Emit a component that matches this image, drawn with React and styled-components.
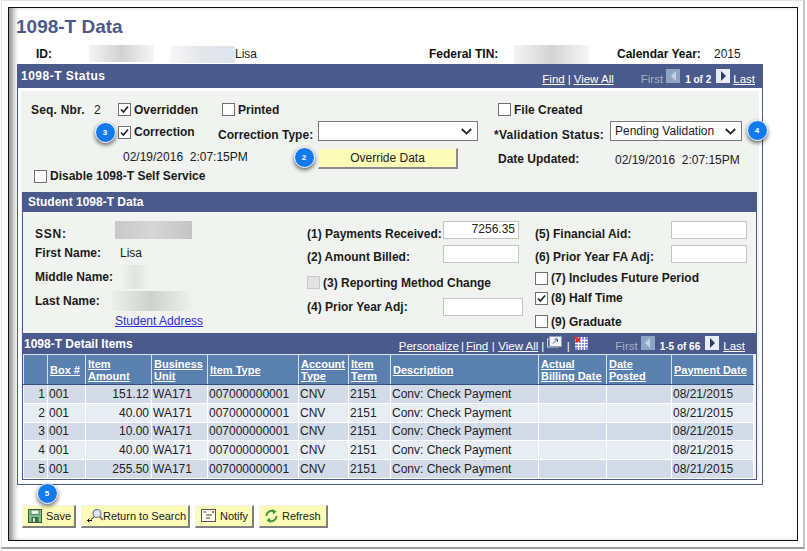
import React from "react";
import styled, { createGlobalStyle } from "styled-components";

const Global = createGlobalStyle`
  html, body { margin: 0; padding: 0; background: #fff; }
  body { font-family: "Liberation Sans", Arial, sans-serif; font-size: 12px; color: #111; }
  a { cursor: pointer; }
`;

const Shot = styled.div`
  width: 807px; height: 551px; box-sizing: border-box; overflow: hidden;
  background: #fff; padding: 0 2px 2px 1px;
`;
const Frame = styled.div`
  height: 100%; box-sizing: border-box; background: #fff;
  border: 1px solid #e4e4e4; border-right: 2px solid #c4c4c4; border-bottom: 2px solid #9c9c9c;
  padding: 6px 5px 6px 6px;
`;
const Win = styled.div`
  position: relative; height: 100%; box-sizing: border-box; background: #fff; border: 1px solid #111;
  padding: 0 0 0 8px;
  box-shadow: inset 7px 0 6px -3px #8a8a8a;
`;
const Title = styled.h1`
  margin: 0 0 0 -1px; padding: 8px 0 0 0; height: 28px; box-sizing: border-box; font-size: 19px; line-height: 22px; font-weight: bold; color: #4a5a8a;
`;
const InfoRow = styled.div`
  display: grid; grid-template-columns: 72px 81px 65px 194px 85px 103px 97px 1fr; align-items: center; height: 28px; box-sizing: border-box; padding-top: 8px;
  font-size: 12px;
`;
const InfoLabel = styled.b`
  padding-left: ${p => p.$pl || 0}px; white-space: nowrap;
`;
const Blur = styled.span`
  display: block; width: ${p => p.$w}px; height: ${p => p.$h}px; margin-top: ${p => p.$mt || 0}px;
  background: linear-gradient(90deg, ${p => p.$from || "#f4f4f4"}, ${p => p.$mid || "#d9d9d9"} 50%, ${p => p.$to || "#f6f6f6"});
`;
const Panel = styled.section`
  position: relative; width: 746px; box-sizing: border-box; border: 1px solid #4a5a8a; border-top: 0; background: #fff;
  padding-bottom: 4px;
`;
const PanelHead = styled.header`
  display: flex; align-items: center; justify-content: space-between; height: 24px; background: #4a5a8a; margin: 0 -1px;
  color: #fff; padding: 0 8px 0 4px; font-weight: bold; font-size: 12px; letter-spacing: .5px;
`;
const Nav = styled.div`
  display: flex; align-items: center; font-weight: normal; font-size: 11.5px; letter-spacing: 0; color: #fff; padding-top: ${p => p.$pt ?? 5}px; white-space: nowrap;
`;
const NavLink = styled.a`
  color: #fff; text-decoration: underline; font-size: 11.5px; margin-left: ${p => p.$ml || 0}px;
`;
const Sep = styled.span`
  margin: 0 ${p => p.$m ?? 3}px; color: #fff;
`;
const Dim = styled.span`
  color: #a6b0c8; margin-left: ${p => p.$ml || 0}px;
`;
const Count = styled.b`
  font-size: 10px; margin: 0 2px 0 5px; padding-top: 1px;
`;
const Arrow = styled.span`
  display: inline-flex; width: 14px; height: 14px; margin: -5px 0 0 ${p => p.$ml ?? 3}px; background: ${p => p.$off ? "#8ea6c4" : "#e8edf8"};
  align-items: center; justify-content: center;
`;
const StatusBody = styled.div`
  background: #f0f3ef; margin: 3px 3px 0; padding: 8px 0 0;
  width: 738px;
`;
const FormRow = styled.div`
  display: flex; align-items: center; height: ${p => p.$h}px; padding-left: ${p => p.$pl || 0}px; margin-top: ${p => p.$mt || 0}px;
`;
const Cell = styled.div`
  display: flex; align-items: center; width: ${p => p.$w ? `${p.$w}px` : "auto"}; flex: none; position: relative; white-space: nowrap;
  padding-top: ${p => p.$pt || 0}px;
`;
const Label = styled.label`
  font-weight: bold; font-size: 12px; color: #1c1c1c; white-space: nowrap; letter-spacing: ${p => p.$ls || 0}px;
`;
const Value = styled.span`
  font-size: 12px; color: #222; white-space: pre; margin-left: ${p => p.$ml || 0}px;
`;
const Box = styled.span`
  display: inline-flex; align-items: center; justify-content: center; box-sizing: border-box; width: 13px; height: 13px; flex: none; margin-right: 3px;
  background: ${p => p.$off ? "#e3e3e3" : "#fff"}; border: 1px solid ${p => p.$off ? "#c8c8c8" : "#707070"};
`;
const Check = ({ on, off }) => (
  <Box $off={off}>
    {on && <svg width="11" height="11" viewBox="0 0 11 11"><path d="M2 5.5 L4.4 8 L9 2.5" fill="none" stroke="#222" strokeWidth="1.7" /></svg>}
  </Box>
);
const Select = styled.div`
  display: flex; align-items: center; justify-content: space-between; box-sizing: border-box; width: ${p => p.$w}px; height: 20px; background: #fff;
  border: 1px solid #7a7a7a; padding: 0 5px 0 4px; font-size: 12px; color: #222;
`;
const Chevron = () => (
  <svg width="11" height="7" viewBox="0 0 11 7"><path d="M0.8 1 L5.5 5.6 L10.2 1" fill="none" stroke="#222" strokeWidth="1.8" /></svg>
);
const OverrideBtn = styled.button`
  width: 140px; height: 21px; box-sizing: border-box; background: #fdfbb8; border-style: solid; border-width: 1px 2px 2px 1px; border-color: #f2f2f2 #8a8a8a #8a8a8a #f2f2f2;
  font: 12px "Liberation Sans", Arial, sans-serif; color: #222; padding: 0;
`;
const Badge = styled.span`
  position: absolute; left: ${p => p.$x}px; top: ${p => p.$y}px; width: 21px; height: 21px; box-sizing: border-box; border-radius: 50%;
  background: #1279ef; border: 1px solid #fff; box-shadow: 0 2px 4px rgba(0,0,0,.6); color: #fff; font-size: 8px; font-weight: bold;
  display: flex; align-items: center; justify-content: center; z-index: 3;
`;
const Student = styled.div`
  border: 1px solid #4a5a8a; margin: 9px 0 0 1px; width: 733px; background: #f0f3ef;
`;
const StudentHead = styled.div`
  height: 19px; background: #4a5a8a; color: #fff; font-weight: bold; font-size: 12px; padding-left: 5px; line-height: 19px;
`;
const Columns = styled.div`
  display: grid; grid-template-columns: 284px 228px 1fr; height: 121px;
`;
const Col = styled.div`
  display: flex; flex-direction: column; padding-left: ${p => p.$pl || 0}px;
`;
const Line = styled.div`
  display: flex; align-items: center; height: ${p => p.$h}px; box-sizing: border-box; padding-top: ${p => p.$pt || 0}px; position: relative;
`;
const Fixed = styled.div`
  width: ${p => p.$w}px; flex: none; white-space: nowrap;
`;
const Input = styled.div`
  box-sizing: border-box; width: ${p => p.$w || 76}px; height: 18px; background: #fff; border: 1px solid #c4c4c4; flex: none; margin-top: ${p => p.$mt || 0}px;
  text-align: right; font-size: 12px; line-height: 15px; padding-right: 3px; color: #222;
`;
const AddressLink = styled.a`
  color: #2e2ed8; text-decoration: underline; font-size: 12px; margin-left: 80px;
`;
const DetailHead = styled.div`
  display: flex; justify-content: space-between; align-items: center; height: 21px; background: #4a5a8a; color: #fff; font-weight: bold; padding: 0 11px 0 1px; font-size: 12px;
`;
const Table = styled.table`
  border-collapse: collapse; table-layout: fixed; width: 730px; font-size: 12px; border-bottom: 1px solid #4a5a8a;
`;
const Th = styled.th`
  background: #5a80b0; height: 30px; padding: 0 1px 0 2px; border: 1px solid #d6e0ee; border-top-color: #dbe4f0; border-bottom-color: #35507e; text-align: left; vertical-align: middle;
  font-size: 11px; line-height: 12px; font-weight: bold; color: #fff; box-sizing: border-box;
  text-decoration: underline; white-space: pre; overflow: hidden;
`;
const Td = styled.td`
  background: ${p => p.$alt ? "#e8edf4" : "#d3dbe8"}; height: 18.8px; box-sizing: border-box; padding: 0 2px 0 1px; border: 1px solid #fff; border-top: 0; white-space: nowrap; overflow: hidden;
  text-align: ${p => p.$right ? "right" : "left"}; color: #222; font-size: 12px; line-height: 14px;
`;
const Footer = styled.div`
  position: relative; display: flex; gap: 5px; margin: 20px 0 0 5px;
`;
const TButton = styled.button`
  display: flex; align-items: center; gap: ${p => p.$gap ?? 4}px; height: 23px; box-sizing: border-box; padding: 0 0 0 5px; width: ${p => p.$w}px;
  background: #fdfbb8; border-style: solid; border-width: 1px 2px 2px 1px; border-color: #f2f2f2 #7f7f7f #7f7f7f #f2f2f2; font: 11px "Liberation Sans", Arial, sans-serif; color: #222; white-space: nowrap;
`;
const LiftedSvg = styled.svg`
  margin-top: -5px; flex: none;
`;

const TriLeft = () => <svg width="7" height="10" viewBox="0 0 7 10"><path d="M6 0 L1 5 L6 10 Z" fill="#c4d3e6" /></svg>;
const TriRight = () => <svg width="7" height="10" viewBox="0 0 7 10"><path d="M1 0 L6 5 L1 10 Z" fill="#2c3a6e" /></svg>;

const PopIcon = () => (
  <LiftedSvg width="15" height="14" viewBox="0 0 15 14">
    <rect x="0.5" y="3" width="11" height="8" fill="none" stroke="#cfd6e6" />
    <rect x="2.5" y="0.5" width="12" height="10" fill="#f2f4f8" stroke="#8d99b8" />
    <path d="M6 7.5 L10.5 3 M7.5 3 H10.5 V6" stroke="#4a5a8a" fill="none" />
  </LiftedSvg>
);
const GridIcon = () => (
  <LiftedSvg width="14" height="14" viewBox="0 0 14 14">
    <rect x="1" y="1" width="13" height="13" fill="#8f8fe8" />
    <path d="M1 4.5H14 M1 7.5H14 M1 10.5H14 M4.5 1V14 M7.5 1V14 M10.5 1V14" stroke="#fff" />
    <path d="M0 0 L5 5 M5 1.5 V5 H1.5" fill="none" stroke="#e8242c" strokeWidth="1.8" />
  </LiftedSvg>
);
const SaveIcon = () => (
  <svg width="14" height="14" viewBox="0 0 14 14">
    <rect x="0.5" y="0.5" width="13" height="13" fill="#7fc08a" stroke="#345a40" />
    <rect x="3" y="1" width="8" height="4.5" fill="#e7f3e6" stroke="#345a40" strokeWidth="0.7" />
    <rect x="3.5" y="8" width="7" height="5.5" fill="#3c6a4c" />
    <rect x="5" y="9" width="2" height="4" fill="#cfe3cf" />
  </svg>
);
const SearchIcon = () => (
  <svg width="16" height="15" viewBox="0 0 16 15">
    <circle cx="10" cy="5.5" r="4" fill="#dfe8f4" stroke="#6d7f95" strokeWidth="1.2" />
    <path d="M7 9 L4 11.5 M0.5 12.5 H5 M2.5 10.5 L0.5 12.5 L2.5 14.5" stroke="#111" fill="none" strokeWidth="1" />
    <path d="M13 8.5 L15.5 12" stroke="#7a6a50" strokeWidth="1.6" />
  </svg>
);
const NotifyIcon = () => (
  <svg width="15" height="13" viewBox="0 0 15 13">
    <rect x="0.5" y="0.5" width="14" height="12" fill="#fbfbf0" stroke="#555" />
    <path d="M2.5 3 H5 M5 6 H11 M5 9 H9" stroke="#444" />
    <rect x="11" y="2" width="2" height="2" fill="#d05a5a" />
  </svg>
);
const RefreshIcon = () => (
  <svg width="13" height="14" viewBox="0 0 13 14">
    <path d="M1.5 7 A5 5 0 0 1 9 2.5" fill="none" stroke="#3f9c35" strokeWidth="2" />
    <path d="M7.5 0 L11.5 2.5 L8 5.5 Z" fill="#3f9c35" />
    <path d="M11.5 7 A5 5 0 0 1 4 11.5" fill="none" stroke="#3f9c35" strokeWidth="2" />
    <path d="M5.5 14 L1.5 11.5 L5 8.5 Z" fill="#3f9c35" />
  </svg>
);

const cols = [24, 38, 66, 56, 91, 50, 42, 148, 68, 65, 82];
const headers = ["", "Box #", "Item\nAmount", "Business\nUnit", "Item Type", "Account\nType", "Item\nTerm", "Description", "Actual\nBilling Date", "Date\nPosted", "Payment Date"];
const rows = [
  [1, "151.12"], [2, "40.00"], [3, "10.00"], [4, "40.00"], [5, "255.50"],
];

export default function App() {
  return (
    <Shot>
      <Global />
      <Frame>
      <Win>
        <Title>1098-T Data</Title>
        <InfoRow>
          <InfoLabel $pl={19}>ID:</InfoLabel>
          <Blur $w={65} $h={17} $mid="#d2d2d2" $mt={-2} />
          <Blur $w={65} $h={17} $from="#f7f7f7" $mid="#e4e6ea" $to="#dfe4ee" />
          <Value>Lisa</Value>
          <InfoLabel>Federal TIN:</InfoLabel>
          <Blur $w={75} $h={19} $mid="#d4d4d4" />
          <InfoLabel>Calendar Year:</InfoLabel>
          <Value>2015</Value>
        </InfoRow>
        <Panel>
          <PanelHead>
            <span>1098-T Status</span>
            <Nav>
              <NavLink>Find</NavLink><Sep>|</Sep><NavLink>View All</NavLink>
              <Dim $ml={27}>First</Dim>
              <Arrow $off $ml={3}><TriLeft /></Arrow>
              <Count>1 of 2</Count>
              <Arrow><TriRight /></Arrow>
              <NavLink $ml={3}>Last</NavLink>
            </Nav>
          </PanelHead>
          <StatusBody>
            <FormRow $h={21} $pl={10}>
              <Cell $w={63}><Label $ls={0.2}>Seq. Nbr.</Label></Cell>
              <Cell $w={24}><Value>2</Value></Cell>
              <Cell $w={104}><Check on /><Label>Overridden</Label></Cell>
              <Cell $w={276}><Check /><Label>Printed</Label></Cell>
              <Cell><Check /><Label>File Created</Label></Cell>
            </FormRow>
            <FormRow $h={22} $pl={97}>
              <Cell $w={100} $pt={2}><Check on /><Label>Correction</Label></Cell>
              <Cell $w={100} $pt={7}><Label>Correction Type:</Label></Cell>
              <Cell $w={176}><Select $w={160}><span /><Chevron /></Select></Cell>
              <Cell $w={116} $pt={7}><Label $ls={0.25}>*Validation Status:</Label></Cell>
              <Cell><Select $w={132}>Pending Validation<Chevron /></Select></Cell>
            </FormRow>
            <FormRow $h={24} $mt={3} $pl={102}>
              <Cell $w={195}><Value>02/19/2016  2:07:15PM</Value></Cell>
              <Cell $w={180} $pt={3}><OverrideBtn>Override Data</OverrideBtn></Cell>
              <Cell $w={117} $pt={4}><Label>Date Updated:</Label></Cell>
              <Cell $pt={5}><Value>02/19/2016  2:07:15PM</Value></Cell>
            </FormRow>
            <FormRow $h={14} $pl={13}>
              <Check /><Label>Disable 1098-T Self Service</Label>
            </FormRow>
            <Student>
              <StudentHead>Student 1098-T Data</StudentHead>
              <Columns>
                <Col $pl={12}>
                  <Line $h={31} $pt={13}>
                    <Fixed $w={80}><Label $ls={0.8}>SSN:</Label></Fixed>
                    <Blur $w={77} $h={18} $from="#c9c9c9" $mid="#d6d6d6" $to="#c4c4c4" $mt={-8} />
                  </Line>
                  <Line $h={20}><Fixed $w={85}><Label>First Name:</Label></Fixed><Value>Lisa</Value></Line>
                  <Line $h={27}>
                    <Fixed $w={85}><Label>Middle Name:</Label></Fixed>
                    <Blur $w={30} $h={24} $from="#f0f3ef" $mid="#e2e4e2" $to="#f0f3ef" />
                  </Line>
                  <Line $h={22}>
                    <Fixed $w={76}><Label>Last Name:</Label></Fixed>
                    <Blur $w={80} $h={20} $from="#eef0ee" $mid="#cfd1cf" $to="#eef0ee" />
                  </Line>
                  <Line $h={17}><AddressLink>Student Address</AddressLink></Line>
                </Col>
                <Col>
                  <Line $h={31} $pt={13}>
                    <Fixed $w={136}><Label>(1) Payments Received:</Label></Fixed>
                    <Input $mt={-8}>7256.35</Input>
                  </Line>
                  <Line $h={28}><Fixed $w={136}><Label>(2) Amount Billed:</Label></Fixed><Input $mt={-6} /></Line>
                  <Line $h={23}><Check off /><Label>(3) Reporting Method Change</Label></Line>
                  <Line $h={26}><Fixed $w={136}><Label>(4) Prior Year Adj:</Label></Fixed><Input $w={80} /></Line>
                </Col>
                <Col>
                  <Line $h={31} $pt={13}>
                    <Fixed $w={136}><Label>(5) Financial Aid:</Label></Fixed>
                    <Input $mt={-8} />
                  </Line>
                  <Line $h={28}><Fixed $w={136}><Label>(6) Prior Year FA Adj:</Label></Fixed><Input $mt={-6} /></Line>
                  <Line $h={14}><Check /><Label>(7) Includes Future Period</Label></Line>
                  <Line $h={26}><Check on /><Label>(8) Half Time</Label></Line>
                  <Line $h={21}><Check /><Label>(9) Graduate</Label></Line>
                </Col>
              </Columns>
              <DetailHead>
                <span>1098-T Detail Items</span>
                <Nav $pt={4}>
                  <NavLink>Personalize</NavLink><Sep $m={2}>|</Sep><NavLink>Find</NavLink><Sep $m={3.5}>|</Sep><NavLink>View All</NavLink><Sep>|</Sep>
                  <PopIcon /><Sep $m={4.5}>|</Sep><GridIcon />
                  <Dim $ml={27}>First</Dim>
                  <Arrow $off><TriLeft /></Arrow>
                  <Count>1-5 of 66</Count>
                  <Arrow><TriRight /></Arrow>
                  <NavLink $ml={4}>Last</NavLink>
                </Nav>
              </DetailHead>
              <Table>
                <colgroup>{cols.map((w, i) => <col key={i} style={{ width: w }} />)}</colgroup>
                <thead>
                  <tr>{headers.map((h, i) => <Th key={i}>{h}</Th>)}</tr>
                </thead>
                <tbody>
                  {rows.map(([n, amt], i) => (
                    <tr key={n}>
                      <Td $alt={i % 2 === 1} $right>{n}</Td>
                      <Td $alt={i % 2 === 1}>001</Td>
                      <Td $alt={i % 2 === 1} $right>{amt}</Td>
                      <Td $alt={i % 2 === 1}>WA171</Td>
                      <Td $alt={i % 2 === 1}>007000000001</Td>
                      <Td $alt={i % 2 === 1}>CNV</Td>
                      <Td $alt={i % 2 === 1}>2151</Td>
                      <Td $alt={i % 2 === 1}>Conv: Check Payment</Td>
                      <Td $alt={i % 2 === 1} />
                      <Td $alt={i % 2 === 1} />
                      <Td $alt={i % 2 === 1}>08/21/2015</Td>
                    </tr>
                  ))}
                </tbody>
              </Table>
            </Student>
          </StatusBody>
        </Panel>
        <Footer>
          <TButton $w={54}><SaveIcon />Save</TButton>
          <TButton $w={109} $gap={0}><SearchIcon />Return to Search</TButton>
          <TButton $w={59}><NotifyIcon />Notify</TButton>
          <TButton $w={69}><RefreshIcon />Refresh</TButton>
        </Footer>
        <Badge $x={85.5} $y={113.5}>3</Badge>
        <Badge $x={284.5} $y={138.5}>2</Badge>
        <Badge $x={737.5} $y={111.5}>4</Badge>
        <Badge $x={27.5} $y={474.5}>5</Badge>
      </Win>
      </Frame>
    </Shot>
  );
}
